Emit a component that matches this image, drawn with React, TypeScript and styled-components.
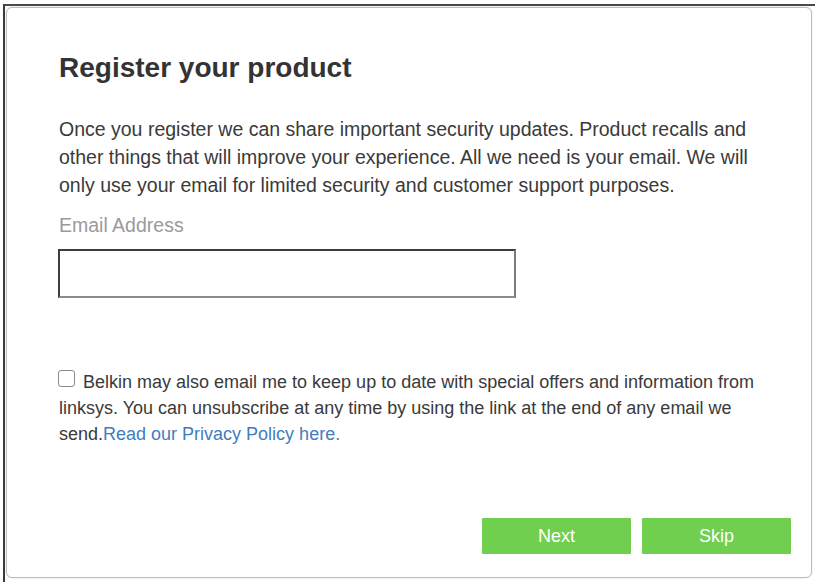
import React from "react";
import styled, { createGlobalStyle } from "styled-components";

const GlobalStyle = createGlobalStyle`
  html, body {
    margin: 0;
    padding: 0;
    background: #ffffff;
    font-family: "Liberation Sans", Arial, sans-serif;
  }
  * { box-sizing: border-box; }
`;

const Frame = styled.div`
  margin: 4px 0 0 3px;
  width: 812px;
  height: 578px;
  border-top: 2px solid #4a4a4a;
  border-left: 2px solid #3a3a3a;
  display: flex;
`;

const Modal = styled.div`
  margin: 1px 0 0 1px;
  width: 806px;
  height: 571px;
  background: #ffffff;
  border: 1px solid #bdbdbd;
  border-radius: 6px;
  box-shadow: 0 0 2px rgba(0, 0, 0, 0.15);
  display: flex;
  flex-direction: column;
  padding: 44px 20px 23px 52px;
`;

const Title = styled.h1`
  margin: 0;
  font-size: 28px;
  line-height: 32px;
  font-weight: 700;
  color: #333333;
`;

const Intro = styled.p`
  margin: 31px 0 0;
  max-width: 715px;
  font-size: 19.5px;
  line-height: 28px;
  color: #3a3a3a;
`;

const Label = styled.label`
  display: block;
  margin-top: 12px;
  font-size: 19.5px;
  line-height: 28px;
  color: #9a9a9a;
`;

const EmailInput = styled.input`
  display: block;
  margin: 10px 0 0 -1px;
  width: 458px;
  height: 49px;
  border: 2px solid;
  border-color: #3c3c3c #7a7a7a #8c8c8c #3c3c3c;
  background: #ffffff;
  outline: none;
  font-family: inherit;
  font-size: 18px;
  padding: 0 10px;
`;

const Consent = styled.p`
  margin: 71px 0 0;
  max-width: 730px;
  font-size: 18px;
  line-height: 26px;
  color: #3a3a3a;
`;

const Check = styled.input`
  appearance: none;
  -webkit-appearance: none;
  display: inline-block;
  width: 17px;
  height: 17px;
  margin: 0 8px 0 -1px;
  vertical-align: 1px;
  border: 1px solid #8a8a8a;
  border-radius: 3px;
  background: #ffffff;
`;

const Link = styled.a`
  color: #3f7dbf;
  text-decoration: none;
`;

const Actions = styled.div`
  margin-top: auto;
  display: flex;
  justify-content: flex-end;
  gap: 11px;
`;

const ActionButton = styled.button`
  width: 149px;
  height: 36px;
  border: none;
  border-radius: 1px;
  background: #70cf4e;
  color: #ffffff;
  font-family: "Liberation Sans", Arial, sans-serif;
  font-size: 18px;
  cursor: pointer;
`;

export default function App() {
  return (
    <>
      <GlobalStyle />
      <Frame>
        <Modal>
          <Title>Register your product</Title>
          <Intro>
            Once you register we can share important security updates. Product recalls and
            other things that will improve your experience. All we need is your email. We will
            only use your email for limited security and customer support purposes.
          </Intro>
          <Label htmlFor="email">Email Address</Label>
          <EmailInput id="email" type="email" />
          <Consent>
            <Check type="checkbox" />
            Belkin may also email me to keep up to date with special offers and information from
            linksys. You can unsubscribe at any time by using the link at the end of any email we
            send.<Link href="#">Read our Privacy Policy here.</Link>
          </Consent>
          <Actions>
            <ActionButton>Next</ActionButton>
            <ActionButton>Skip</ActionButton>
          </Actions>
        </Modal>
      </Frame>
    </>
  );
}
